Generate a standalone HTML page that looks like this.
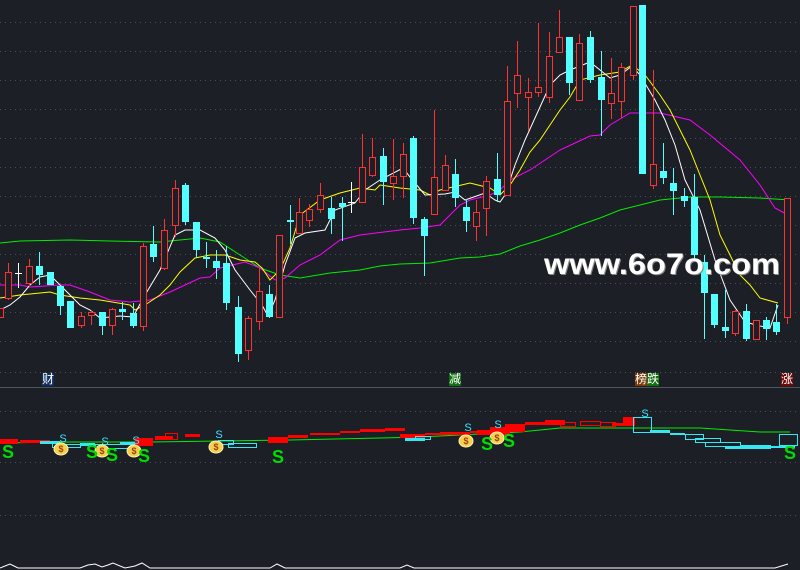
<!DOCTYPE html>
<html><head><meta charset="utf-8"><style>
html,body{margin:0;padding:0;background:#1c1f26;width:800px;height:570px;overflow:hidden}
svg{display:block}
.lb{position:absolute;font:12px "Liberation Sans","Noto Sans CJK SC",sans-serif;color:#fff;line-height:13px;height:13px;padding:0}
</style></head><body>
<div style="position:relative;width:800px;height:570px">
<svg id="s" width="800" height="570" xmlns="http://www.w3.org/2000/svg">
<g id="grid" stroke="#4a4e58" stroke-dasharray="1,4" stroke-width="1"></g>
<line x1="0" y1="387.5" x2="800" y2="387.5" stroke="#50545c"/>
<g id="ma" fill="none" stroke-width="1"></g>
<g id="cd"></g>
<g id="low"></g>
<text x="544" y="274" font-family="Liberation Sans,sans-serif" font-weight="bold" font-size="30" fill="#888" textLength="236" lengthAdjust="spacingAndGlyphs" transform="translate(1,1)">www.6o7o.com</text>
<text x="544" y="274" font-family="Liberation Sans,sans-serif" font-weight="bold" font-size="30" fill="#fff" textLength="236" lengthAdjust="spacingAndGlyphs">www.6o7o.com</text>
<polyline fill="none" stroke="#fff" stroke-width="1" points="0,568 5,566 10,564 14,566 18,568 80,568 88,565 95,564 102,567 108,565 113,563 120,566 125,568 135,566 142,563 150,568 270,568 277,564 285,568 400,568 407,565 414,568 775,568 788,564"/>
</svg>
<div class="lb" style="left:42px;top:373px;background:#12305e">财</div>
<div class="lb" style="left:449px;top:373px;background:#107010">减</div>
<div class="lb" style="left:635px;top:373px;background:#7a3a08">榜</div>
<div class="lb" style="left:647px;top:373px;background:#107010">跌</div>
<div class="lb" style="left:781px;top:373px;background:#700808">涨</div>
</div>
<script>
var NS="http://www.w3.org/2000/svg";
function el(p,t,a){var e=document.createElementNS(NS,t);for(var k in a)e.setAttribute(k,a[k]);document.getElementById(p).appendChild(e);return e;}
[22,51,80,109,138,167,196,225,254,283,312,341,372,411,462,515].forEach(function(y){el("grid","line",{x1:0,y1:y+.5,x2:800,y2:y+.5});});
var C=[[0,308,317,308,317,'r'],[8,272,298,263,300,'r'],[18,273,273,263,288,'w'],[29,266,283,259,287,'r'],[39,266,275,252,285,'c'],[50,272,285,272,285,'c'],[60,286,306,286,315,'c'],[70,301,328,301,328,'c'],[81,316,325,312,328,'r'],[91,312,315,311,325,'r'],[102,312,326,312,335,'c'],[112,309,325,308,335,'r'],[122,309,312,302,320,'c'],[133,313,326,303,328,'c'],[143,246,326,243,331,'r'],[153,244,257,226,262,'c'],[164,230,268,219,270,'r'],[175,188,225,180,237,'r'],[185,185,222,183,225,'c'],[196,222,250,222,258,'c'],[206,257,259,242,268,'c'],[216,261,268,250,279,'c'],[226,263,303,246,310,'c'],[238,307,354,296,362,'c'],[248,318,350,316,360,'r'],[259,291,321,268,330,'r'],[269,294,317,285,318,'c'],[279,235,317,235,318,'r'],[290,220,222,205,244,'c'],[299,212,233,198,234,'r'],[309,209,220,204,227,'r'],[320,195,209,183,213,'r'],[331,208,219,197,234,'c'],[342,203,207,197,241,'c'],[351,202,202,182,213,'w'],[362,167,202,134,202,'r'],[372,157,175,138,177,'r'],[383,156,182,148,205,'c'],[393,176,183,139,200,'r'],[403,154,176,143,198,'r'],[413,138,218,136,224,'c'],[424,219,236,217,276,'c'],[434,177,214,110,214,'r'],[445,165,190,155,190,'r'],[455,174,198,159,207,'c'],[466,207,221,199,232,'c'],[476,212,226,200,241,'r'],[486,181,208,176,236,'r'],[497,179,195,153,202,'c'],[507,101,195,66,195,'r'],[517,75,93,41,108,'r'],[528,92,97,78,131,'r'],[538,87,92,23,97,'r'],[549,56,97,32,103,'r'],[559,37,52,10,52,'r'],[569,37,83,37,95,'c'],[579,43,100,34,100,'r'],[590,37,80,31,83,'c'],[601,77,100,51,136,'c'],[611,93,103,58,119,'r'],[621,67,101,63,118,'r'],[633,6,75,6,80,'r'],[642,5,174,5,174,'c'],[653,164,185,70,189,'r'],[663,171,178,143,184,'c'],[673,183,191,168,215,'c'],[684,196,201,188,207,'c'],[694,197,255,174,262,'c'],[704,262,293,255,339,'c'],[714,294,325,294,328,'c'],[725,327,331,290,338,'c'],[735,311,333,310,336,'r'],[746,311,339,304,341,'c'],[756,320,339,320,339,'r'],[766,320,329,317,340,'c'],[776,322,332,304,335,'c'],[787,198,317,198,324,'r']];
C.forEach(function(c){var x=c[0],o=c[1],cl=c[2],h=c[3],l=c[4],t=c[5];
var col=t=='r'?'#ff3232':t=='c'?'#54ffff':'#ffffff';
el("cd","line",{x1:x+.5,y1:h,x2:x+.5,y2:l,stroke:col});
if(t=='r'){el("cd","rect",{x:x-2.5,y:o+.5,width:6,height:Math.max(cl-o,1),fill:"#1c1f26",stroke:col});el("cd","line",{x1:x+.5,y1:h,x2:x+.5,y2:o,stroke:col});el("cd","line",{x1:x+.5,y1:cl,x2:x+.5,y2:l,stroke:col});}
else if(t=='c'){el("cd","rect",{x:x-3,y:o,width:7,height:Math.max(cl-o,1),fill:col});}
else{el("cd","line",{x1:x-3,y1:o+.5,x2:x+4,y2:o+.5,stroke:col});}
});
function pl(col,pts){el("ma","polyline",{stroke:col,points:pts});}
pl("#00ee00","0,243 20,241 70,240 110,241 160,242 180,240 200,238 220,242 240,255 260,268 280,275 300,278 330,273 360,270 380,266 400,264 430,263 460,258 480,257 500,254 520,246 540,240 560,233 580,225 600,218 620,210 640,205 660,200 690,197 720,197 760,198 790,200");
pl("#ff00ff","0,285 20,285 30,287 60,285 70,285 90,292 110,300 130,302 150,300 170,292 200,278 210,277 220,268 245,262 260,268 275,280 285,278 300,265 320,255 340,240 360,235 400,230 420,228 440,225 460,205 470,200 490,195 500,190 510,180 530,170 545,160 560,150 575,143 590,136 600,135 610,125 630,113 660,113 690,120 710,135 740,160 760,185 775,208 788,215");
pl("#ffff00","0,298 20,295 50,292 60,295 80,298 100,300 130,305 135,310 145,305 160,295 170,285 180,272 195,258 210,255 225,255 240,260 255,262 262,268 270,280 280,270 290,248 300,215 320,200 340,193 360,188 375,190 380,185 400,188 420,190 430,195 440,190 470,183 490,188 500,195 510,185 520,170 530,152 540,140 550,125 560,110 570,97 580,80 600,75 620,72 632,65 645,75 660,95 670,110 680,130 690,150 700,175 710,200 720,235 730,255 740,275 750,285 760,298 778,303");
pl("#ffffff","0,310 10,305 20,297 30,285 40,277 50,275 60,285 70,295 80,305 90,310 100,318 120,316 133,317 145,295 160,270 175,235 185,230 200,230 215,238 225,250 235,270 250,290 262,305 268,316 275,300 285,265 295,238 305,233 325,230 335,210 355,203 365,190 380,180 403,168 410,177 425,195 445,194 455,192 465,200 485,193 495,200 500,202 505,195 515,165 525,140 540,107 550,85 560,75 570,70 590,62 610,78 620,75 632,66 640,75 655,100 665,120 675,145 685,180 700,210 715,260 730,300 745,322 760,326 770,328 778,305");
el("low","polyline",{fill:"none",stroke:"#00ee00",points:"0,443 60,442 150,442 290,440 380,438 420,437 520,432 560,428 620,428 700,428 760,432 790,432"});
var R=[[0,439,18,5,1],[20,440,30,3,1],[135,438,18,8,1],[155,436,18,4,1],[165,433,12,6,0],[185,434,15,3,1],[268,437,20,6,1],[288,435,20,3,1],[310,433,30,2,1],[340,431,20,2,1],[360,429,25,3,1],[385,428,20,3,1],[400,434,25,4,1],[425,433,15,2,1],[440,432,30,3,1],[470,431,20,2,1],[477,430,20,5,1],[490,427,20,9,1],[505,424,20,8,1],[525,422,30,3,1],[545,420,20,5,1],[560,422,15,4,0],[580,421,20,4,0],[600,422,15,4,0],[612,423,20,3,1],[623,417,12,9,1]];
R.forEach(function(r){if(r[4])el("low","rect",{x:r[0],y:r[1],width:r[2],height:r[3],fill:"#ff0000"});else el("low","rect",{x:r[0]+.5,y:r[1]+.5,width:r[2],height:r[3],fill:"none",stroke:"#ff0000"});});
var B=[[40,441,20,3,1],[52,443,10,4,0],[62,444,18,3,0],[80,443,15,3,1],[95,444,35,4,0],[120,442,15,3,1],[218,440,15,4,0],[228,443,28,4,0],[405,438,20,3,1],[415,436,15,3,0],[633,417,18,15,0],[650,430,20,3,1],[670,433,15,2,1],[685,434,18,5,0],[695,438,25,4,0],[705,442,35,4,0],[725,446,45,3,1],[740,445,30,3,0],[770,446,25,2,1],[779,434,18,11,0]];
B.forEach(function(r){if(r[4])el("low","rect",{x:r[0],y:r[1],width:r[2],height:r[3],fill:"#33e8f0"});else el("low","rect",{x:r[0]+.5,y:r[1]+.5,width:r[2],height:r[3],fill:"none",stroke:"#33e8f0"});});
[[61,449],[102,451],[134,451],[216,447],[466,441],[497,438]].forEach(function(p){el("low","ellipse",{cx:p[0],cy:p[1],rx:7,ry:6,fill:"#f5d050",stroke:"#fff3b0"});var t=el("low","text",{x:p[0],y:p[1]+3,"font-size":"9","text-anchor":"middle",fill:"#a04010","font-family":"Liberation Sans,sans-serif","font-weight":"bold"});t.textContent="$";});
[[8,458],[92,458],[112,461],[144,462],[278,463],[487,450],[509,447],[790,459]].forEach(function(p){var t=el("low","text",{x:p[0],y:p[1],"font-size":"18","font-weight":"bold","text-anchor":"middle",fill:"#00dd00","font-family":"Liberation Sans,sans-serif"});t.textContent="S";});
[[63,442],[105,445],[136,444],[219,438],[468,431],[498,428],[645,417]].forEach(function(p){var t=el("low","text",{x:p[0],y:p[1],"font-size":"11","text-anchor":"middle",fill:"#40e0ff","font-family":"Liberation Sans,sans-serif"});t.textContent="S";});
</script>
</body></html>
